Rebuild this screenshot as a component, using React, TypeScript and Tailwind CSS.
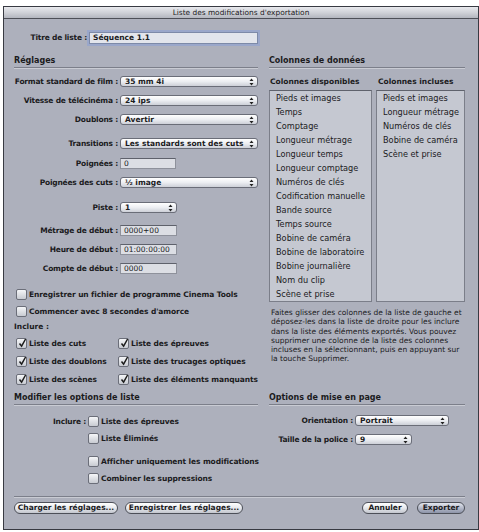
import React from "react";

const available = [
  "Pieds et images",
  "Temps",
  "Comptage",
  "Longueur métrage",
  "Longueur temps",
  "Longueur comptage",
  "Numéros de clés",
  "Codification manuelle",
  "Bande source",
  "Temps source",
  "Bobine de caméra",
  "Bobine de laboratoire",
  "Bobine journalière",
  "Nom du clip",
  "Scène et prise",
];

const included = [
  "Pieds et images",
  "Longueur métrage",
  "Numéros de clés",
  "Bobine de caméra",
  "Scène et prise",
];

const helpLines = [
  "Faites glisser des colonnes de la liste de gauche et",
  "déposez-les dans la liste de droite pour les inclure",
  "dans la liste des éléments exportés. Vous pouvez",
  "supprimer une colonne de la liste des colonnes",
  "incluses en la sélectionnant, puis en appuyant sur",
  "la touche Supprimer.",
];

const Arrows = () => (
  <svg width="5" height="8" viewBox="0 0 5 8" className="shrink-0">
    <path d="M2.5 0.5 L4.5 3 H0.5 Z M2.5 7.5 L0.5 5 H4.5 Z" fill="#222" />
  </svg>
);

const PopUp = ({ value, w }: { value: string; w: string }) => (
  <div
    className={`flex h-[11px] ${w} items-center justify-between rounded-[3px] border border-[#6a6d78] bg-linear-to-b from-white via-[#eceef2] to-[#cdd0d8] pl-[4px] pr-[3px]`}
  >
    <span className="text-[7.5px] font-bold leading-none">{value}</span>
    <Arrows />
  </div>
);

const Field = ({ value, w }: { value: string; w: string }) => (
  <div
    className={`flex h-[11px] ${w} items-center border border-[#8e919b] border-t-[#5e616b] bg-[#dcdee4] pl-[3px] text-[7.5px] leading-none`}
  >
    {value}
  </div>
);

const Check = ({ checked }: { checked?: boolean }) => (
  <div className="relative h-[11px] w-[11px] shrink-0 rounded-[2px] border border-[#6b6e79] bg-linear-to-b from-[#f5f6f8] to-[#c8cbd2]">
    {checked && (
      <svg
        className="absolute -top-[1px] left-[1px]"
        width="9"
        height="10"
        viewBox="0 0 9 10"
      >
        <path
          d="M1.5 5.5 L3.6 8.2 L7.6 1"
          stroke="#1c1c1c"
          strokeWidth="1.5"
          fill="none"
        />
      </svg>
    )}
  </div>
);

const CheckItem = ({
  label,
  checked,
  className = "",
}: {
  label: string;
  checked?: boolean;
  className?: string;
}) => (
  <div className={`flex h-[11px] items-center gap-[2px] ${className}`}>
    <Check checked={checked} />
    <span className="whitespace-nowrap text-[7.5px] font-bold leading-none tracking-[-0.1px]">
      {label}
    </span>
  </div>
);

const SectionHead = ({ children }: { children: React.ReactNode }) => (
  <div className="h-[13px] border-b border-[#7c7f8a] text-[8px] font-bold leading-[11px] shadow-[0_1px_0_rgba(255,255,255,0.35)]">
    {children}
  </div>
);

const Row = ({
  label,
  mt,
  lw = "w-[104px]",
  children,
}: {
  label: string;
  mt: string;
  lw?: string;
  children: React.ReactNode;
}) => (
  <div className={`${mt} flex h-[11px] items-center gap-[2px]`}>
    <span
      className={`${lw} shrink-0 whitespace-nowrap text-right text-[7.5px] font-bold leading-none tracking-[-0.2px]`}
    >
      {label}
    </span>
    {children}
  </div>
);

const PushButton = ({
  label,
  w,
  primary,
}: {
  label: string;
  w: string;
  primary?: boolean;
}) => (
  <button
    className={`flex h-[12px] ${w} items-center justify-center rounded-full border border-[#4c4f58] text-[7.5px] font-bold leading-none ${
      primary
        ? "bg-linear-to-b from-[#e4e7ef] via-[#b5bac9] to-[#8d94a8]"
        : "bg-linear-to-b from-white via-[#e7e9ed] to-[#c3c6ce]"
    }`}
  >
    {label}
  </button>
);

const ListBox = ({ items, w }: { items: string[]; w: string }) => (
  <div
    className={`${w} h-[212px] border border-[#7b7e89] border-t-[#5f626c] bg-[#c5c8d1] pl-[6px]`}
  >
    {items.map((item) => (
      <div key={item} className="whitespace-nowrap text-[8.2px] leading-[14px]">
        {item}
      </div>
    ))}
  </div>
);

export default function App() {
  return (
    <div className="h-[532px] w-[479px] bg-white pl-[3px] pt-[6px] font-['DejaVu_Sans',sans-serif] text-[#1b1b1d]">
      <div className="flex h-[524px] w-[476px] flex-col border border-[#383a42] bg-[#adb0bc]">
        {/* title bar */}
        <div className="flex h-[12px] items-center justify-center border-b border-[#4d4f57] bg-linear-to-b from-[#e8e9ed] via-[#d0d2d8] to-[#b3b6bf] text-[7.4px] leading-none">
          Liste des modifications d'exportation
        </div>

        <div className="flex flex-col px-[10px]">
          <Row label="Titre de liste :" mt="mt-[13px]" lw="w-[73px]">
            <div className="flex h-[12px] w-[169px] items-center border border-[#7d8aa8] bg-[#e2e5ec] pl-[3px] text-[7.5px] font-bold leading-none shadow-[0_0_0_2px_rgba(138,160,214,0.55)]">
              Séquence 1.1
            </div>
          </Row>

          <div className="mt-[12px] flex gap-[11px]">
            {/* settings column */}
            <div className="flex w-[244px] flex-col">
              <SectionHead>Réglages</SectionHead>
              <Row label="Format standard de film :" mt="mt-[8px]">
                <PopUp value="35 mm 4i" w="w-[138px]" />
              </Row>
              <Row label="Vitesse de télécinéma :" mt="mt-[8px]">
                <PopUp value="24 ips" w="w-[138px]" />
              </Row>
              <Row label="Doublons :" mt="mt-[8px]">
                <PopUp value="Avertir" w="w-[138px]" />
              </Row>
              <Row label="Transitions :" mt="mt-[13px]">
                <PopUp value="Les standards sont des cuts" w="w-[139px]" />
              </Row>
              <Row label="Poignées :" mt="mt-[9px]">
                <Field value="0" w="w-[56px]" />
              </Row>
              <Row label="Poignées des cuts :" mt="mt-[8px]">
                <PopUp value="½ image" w="w-[138px]" />
              </Row>
              <Row label="Piste :" mt="mt-[14px]">
                <PopUp value="1" w="w-[57px]" />
              </Row>
              <Row label="Métrage de début :" mt="mt-[12px]">
                <Field value="0000+00" w="w-[57px]" />
              </Row>
              <Row label="Heure de début :" mt="mt-[8px]">
                <Field value="01:00:00:00" w="w-[57px]" />
              </Row>
              <Row label="Compte de début :" mt="mt-[8px]">
                <Field value="0000" w="w-[57px]" />
              </Row>

              <CheckItem
                className="mt-[15px] pl-[2px]"
                label="Enregistrer un fichier de programme Cinema Tools"
              />
              <CheckItem
                className="mt-[6px] pl-[2px]"
                label="Commencer avec 8 secondes d'amorce"
              />
              <div className="mt-[4px] flex h-[11px] items-center text-[7.5px] font-bold leading-none">
                Inclure :
              </div>
              <div className="mt-[6px] grid grid-cols-[102px_1fr] gap-y-[7px] pl-[2px]">
                <CheckItem checked label="Liste des cuts" />
                <CheckItem checked label="Liste des épreuves" />
                <CheckItem checked label="Liste des doublons" />
                <CheckItem checked label="Liste des trucages optiques" />
                <CheckItem checked label="Liste des scènes" />
                <CheckItem checked label="Liste des éléments manquants" />
              </div>
            </div>

            {/* data columns */}
            <div className="flex w-[196px] flex-col">
              <SectionHead>Colonnes de données</SectionHead>
              <div className="mt-[9px] flex h-[10px] items-center whitespace-nowrap text-[7.5px] font-bold leading-none">
                <span className="w-[107px] pl-[1px]">Colonnes disponibles</span>
                <span className="pl-[2px]">Colonnes incluses</span>
              </div>
              <div className="mt-[3px] flex gap-[4px]">
                <ListBox items={available} w="w-[103px]" />
                <ListBox items={included} w="w-[89px]" />
              </div>
              <div className="mt-[6px] pl-[2px] text-[7.5px] leading-[9.3px]">
                {helpLines.map((line) => (
                  <div key={line} className="whitespace-nowrap">
                    {line}
                  </div>
                ))}
              </div>
            </div>
          </div>

          <div className="mt-[7px] flex gap-[11px]">
            {/* list options */}
            <div className="flex w-[244px] flex-col">
              <SectionHead>Modifier les options de liste</SectionHead>
              <Row label="Inclure :" mt="mt-[11px]" lw="w-[72px]">
                <CheckItem label="Liste des épreuves" />
              </Row>
              <CheckItem className="mt-[6px] pl-[74px]" label="Liste Éliminés" />
              <CheckItem
                className="mt-[12px] pl-[74px]"
                label="Afficher uniquement les modifications"
              />
              <CheckItem
                className="mt-[6px] pl-[74px]"
                label="Combiner les suppressions"
              />
            </div>

            {/* page layout */}
            <div className="flex w-[196px] flex-col">
              <SectionHead>Options de mise en page</SectionHead>
              <Row label="Orientation :" mt="mt-[10px]" lw="w-[84px]">
                <PopUp value="Portrait" w="w-[94px]" />
              </Row>
              <Row label="Taille de la police :" mt="mt-[8px]" lw="w-[84px]">
                <PopUp value="9" w="w-[57px]" />
              </Row>
            </div>
          </div>

          <div className="mt-[12px] h-px w-[451px] bg-[#7c7f8a] shadow-[0_1px_0_rgba(255,255,255,0.35)]" />

          <div className="mt-[5px] flex w-[451px] items-center">
            <PushButton label="Charger les réglages..." w="w-[104px]" />
            <PushButton
              label="Enregistrer les réglages..."
              w="ml-[7px] w-[118px]"
            />
            <PushButton label="Annuler" w="ml-auto w-[46px]" />
            <PushButton label="Exporter" w="ml-[9px] w-[48px]" primary />
          </div>
        </div>
      </div>
    </div>
  );
}
